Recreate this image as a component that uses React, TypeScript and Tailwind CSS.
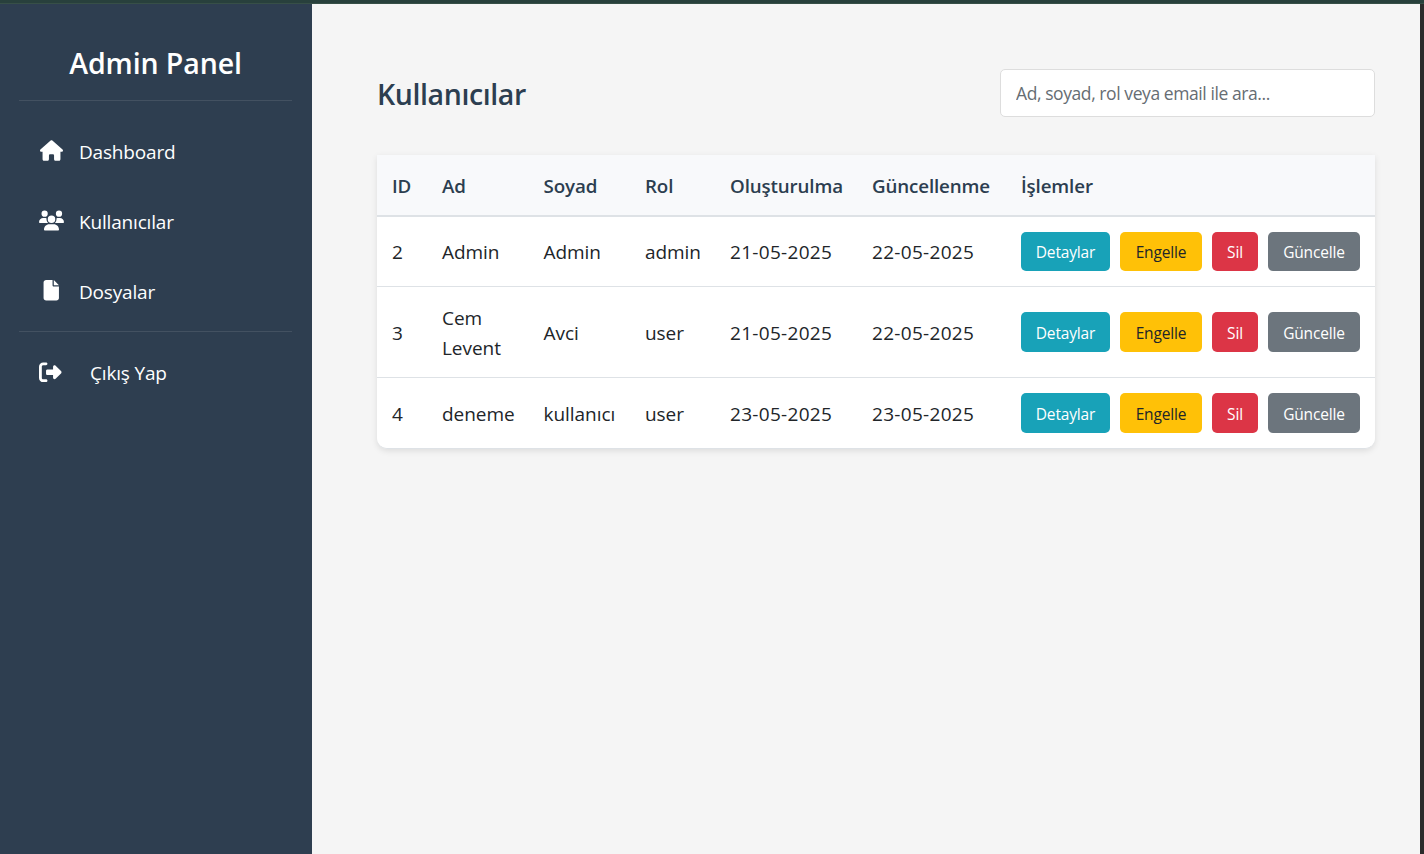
import type { ReactNode } from "react";
import { FaFile, FaHouse, FaRightFromBracket, FaUsers } from "react-icons/fa6";

type User = {
  id: number;
  ad: string;
  soyad: string;
  rol: string;
  created: string;
  updated: string;
};

const users: User[] = [
  { id: 2, ad: "Admin", soyad: "Admin", rol: "admin", created: "21-05-2025", updated: "22-05-2025" },
  { id: 3, ad: "Cem Levent", soyad: "Avci", rol: "user", created: "21-05-2025", updated: "22-05-2025" },
  { id: 4, ad: "deneme", soyad: "kullanıcı", rol: "user", created: "23-05-2025", updated: "23-05-2025" },
];

const rowHeights = ["h-[70px]", "h-[91px] [&_td]:pt-px", "h-[70px] [&_td:not(:last-child)]:pt-0.5"];
const buttonHeights = ["h-[39px] [&>button]:pt-0", "h-10 -mt-px [&>button]:pt-0.5", "h-10 [&>button]:pt-0.5"];

function NavItem({ icon, children, wide = false }: { icon: ReactNode; children: ReactNode; wide?: boolean }) {
  return (
    <a href="#" className="flex h-[70px] items-center pl-5">
      <span className={wide ? "flex w-[37px] shrink-0" : "flex w-[25px] shrink-0 justify-center pb-px"}>{icon}</span>
      <span className={wide ? "ml-3.5 pt-[3px]" : "ml-[15px] pt-[3px]"}>{children}</span>
    </a>
  );
}

function Sidebar() {
  return (
    <aside className="w-[312px] shrink-0 bg-[#2e3e50] pr-5 pl-[19px] text-[19px] tracking-[-0.18px] text-white">
      <div className="flex h-[97px] items-center justify-center border-b border-[#435161] pt-[22px]">
        <h1 className="text-[28.5px] leading-9 font-semibold tracking-[-0.1px]">Admin Panel</h1>
      </div>
      <nav className="pt-[15px]">
        <NavItem icon={<FaHouse className="h-[23px] w-[23px]" />}>Dashboard</NavItem>
        <NavItem icon={<FaUsers className="h-[25px] w-[25px]" />}>Kullanıcılar</NavItem>
        <NavItem icon={<FaFile className="h-[20.5px] w-[20.5px]" />}>Dosyalar</NavItem>
        <div className="mt-[5px] border-t border-[#435161] pt-[5px]">
          <NavItem wide icon={<FaRightFromBracket className="h-[22.5px] w-[22.5px]" />}>
            Çıkış Yap
          </NavItem>
        </div>
      </nav>
    </aside>
  );
}

function Actions({ height }: { height: string }) {
  return (
    <div className={`flex gap-2.5 text-[15.5px] leading-5 tracking-[-0.15px] [&>button]:rounded-[5px] ${height}`}>
      <button className="w-[89px] bg-[#18a2b8] text-white">Detaylar</button>
      <button className="w-[82px] bg-[#ffc107] text-[#212529]">Engelle</button>
      <button className="w-[46px] bg-[#dc3546] text-white">Sil</button>
      <button className="w-[92px] bg-[#6c757d] text-white">Güncelle</button>
    </div>
  );
}

function UserTable() {
  return (
    <div className="rounded-b-[10px] border-b border-[#dee2e6] shadow-[0_2px_6px_rgba(0,0,0,0.1)]">
      <table className="w-full table-fixed border-separate border-spacing-0 overflow-hidden rounded-b-[10px] bg-white text-left text-[19px] leading-[30px] tracking-[-0.05px] text-[#212529]">
        <colgroup>
          <col className="w-[50px]" />
          <col className="w-[101.5px]" />
          <col className="w-[101.5px]" />
          <col className="w-[85px]" />
          <col className="w-[142px]" />
          <col className="w-[149px]" />
          <col />
        </colgroup>
        <thead>
          <tr className="h-[62px] bg-[#f8f9fb] text-[18.75px] tracking-[-0.13px] text-[#2c3e50]">
            {["ID", "Ad", "Soyad", "Rol", "Oluşturulma", "Güncellenme", "İşlemler"].map((h) => (
              <th key={h} className="border-b-2 border-[#dee2e6] px-[15px] pt-0.5 font-semibold">
                {h}
              </th>
            ))}
          </tr>
        </thead>
        <tbody className="[&_td]:border-b [&_td]:border-[#dee2e6] [&_td]:px-[15px] [&_td]:align-middle [&_tr:last-child_td]:border-b-0">
          {users.map((u, i) => (
            <tr key={u.id} className={rowHeights[i]}>
              <td>{u.id}</td>
              <td>{u.ad}</td>
              <td>{u.soyad}</td>
              <td>{u.rol}</td>
              <td className="tracking-[0.3px]">{u.created}</td>
              <td className="tracking-[0.3px]">{u.updated}</td>
              <td>
                <Actions height={buttonHeights[i]} />
              </td>
            </tr>
          ))}
        </tbody>
      </table>
    </div>
  );
}

export default function App() {
  return (
    <div className="flex h-screen flex-col overflow-hidden bg-[#f5f5f5] font-['Open_Sans','Noto_Sans',sans-serif]">
      <div className="h-1 shrink-0 border-b border-[#374f47] bg-[#28403c]" />
      <div className="flex min-h-0 flex-1">
        <Sidebar />
        <main className="flex-1 pt-[65px] pr-[45px] pl-[65px]">
          <div className="mb-[38px] flex h-12 items-center justify-between">
            <h2 className="pt-0.5 text-[28.5px] leading-9 font-semibold tracking-[-0.4px] text-[#2c3e50]">Kullanıcılar</h2>
            <input
              type="text"
              placeholder="Ad, soyad, rol veya email ile ara..."
              className="h-12 w-[375px] rounded-[5px] border border-[#dddddd] bg-white px-[15px] text-[17.5px] tracking-[-0.42px] placeholder:text-[#666d73]"
            />
          </div>
          <UserTable />
        </main>
        <div className="w-1 shrink-0 bg-[#2b2b2b]" />
      </div>
    </div>
  );
}
